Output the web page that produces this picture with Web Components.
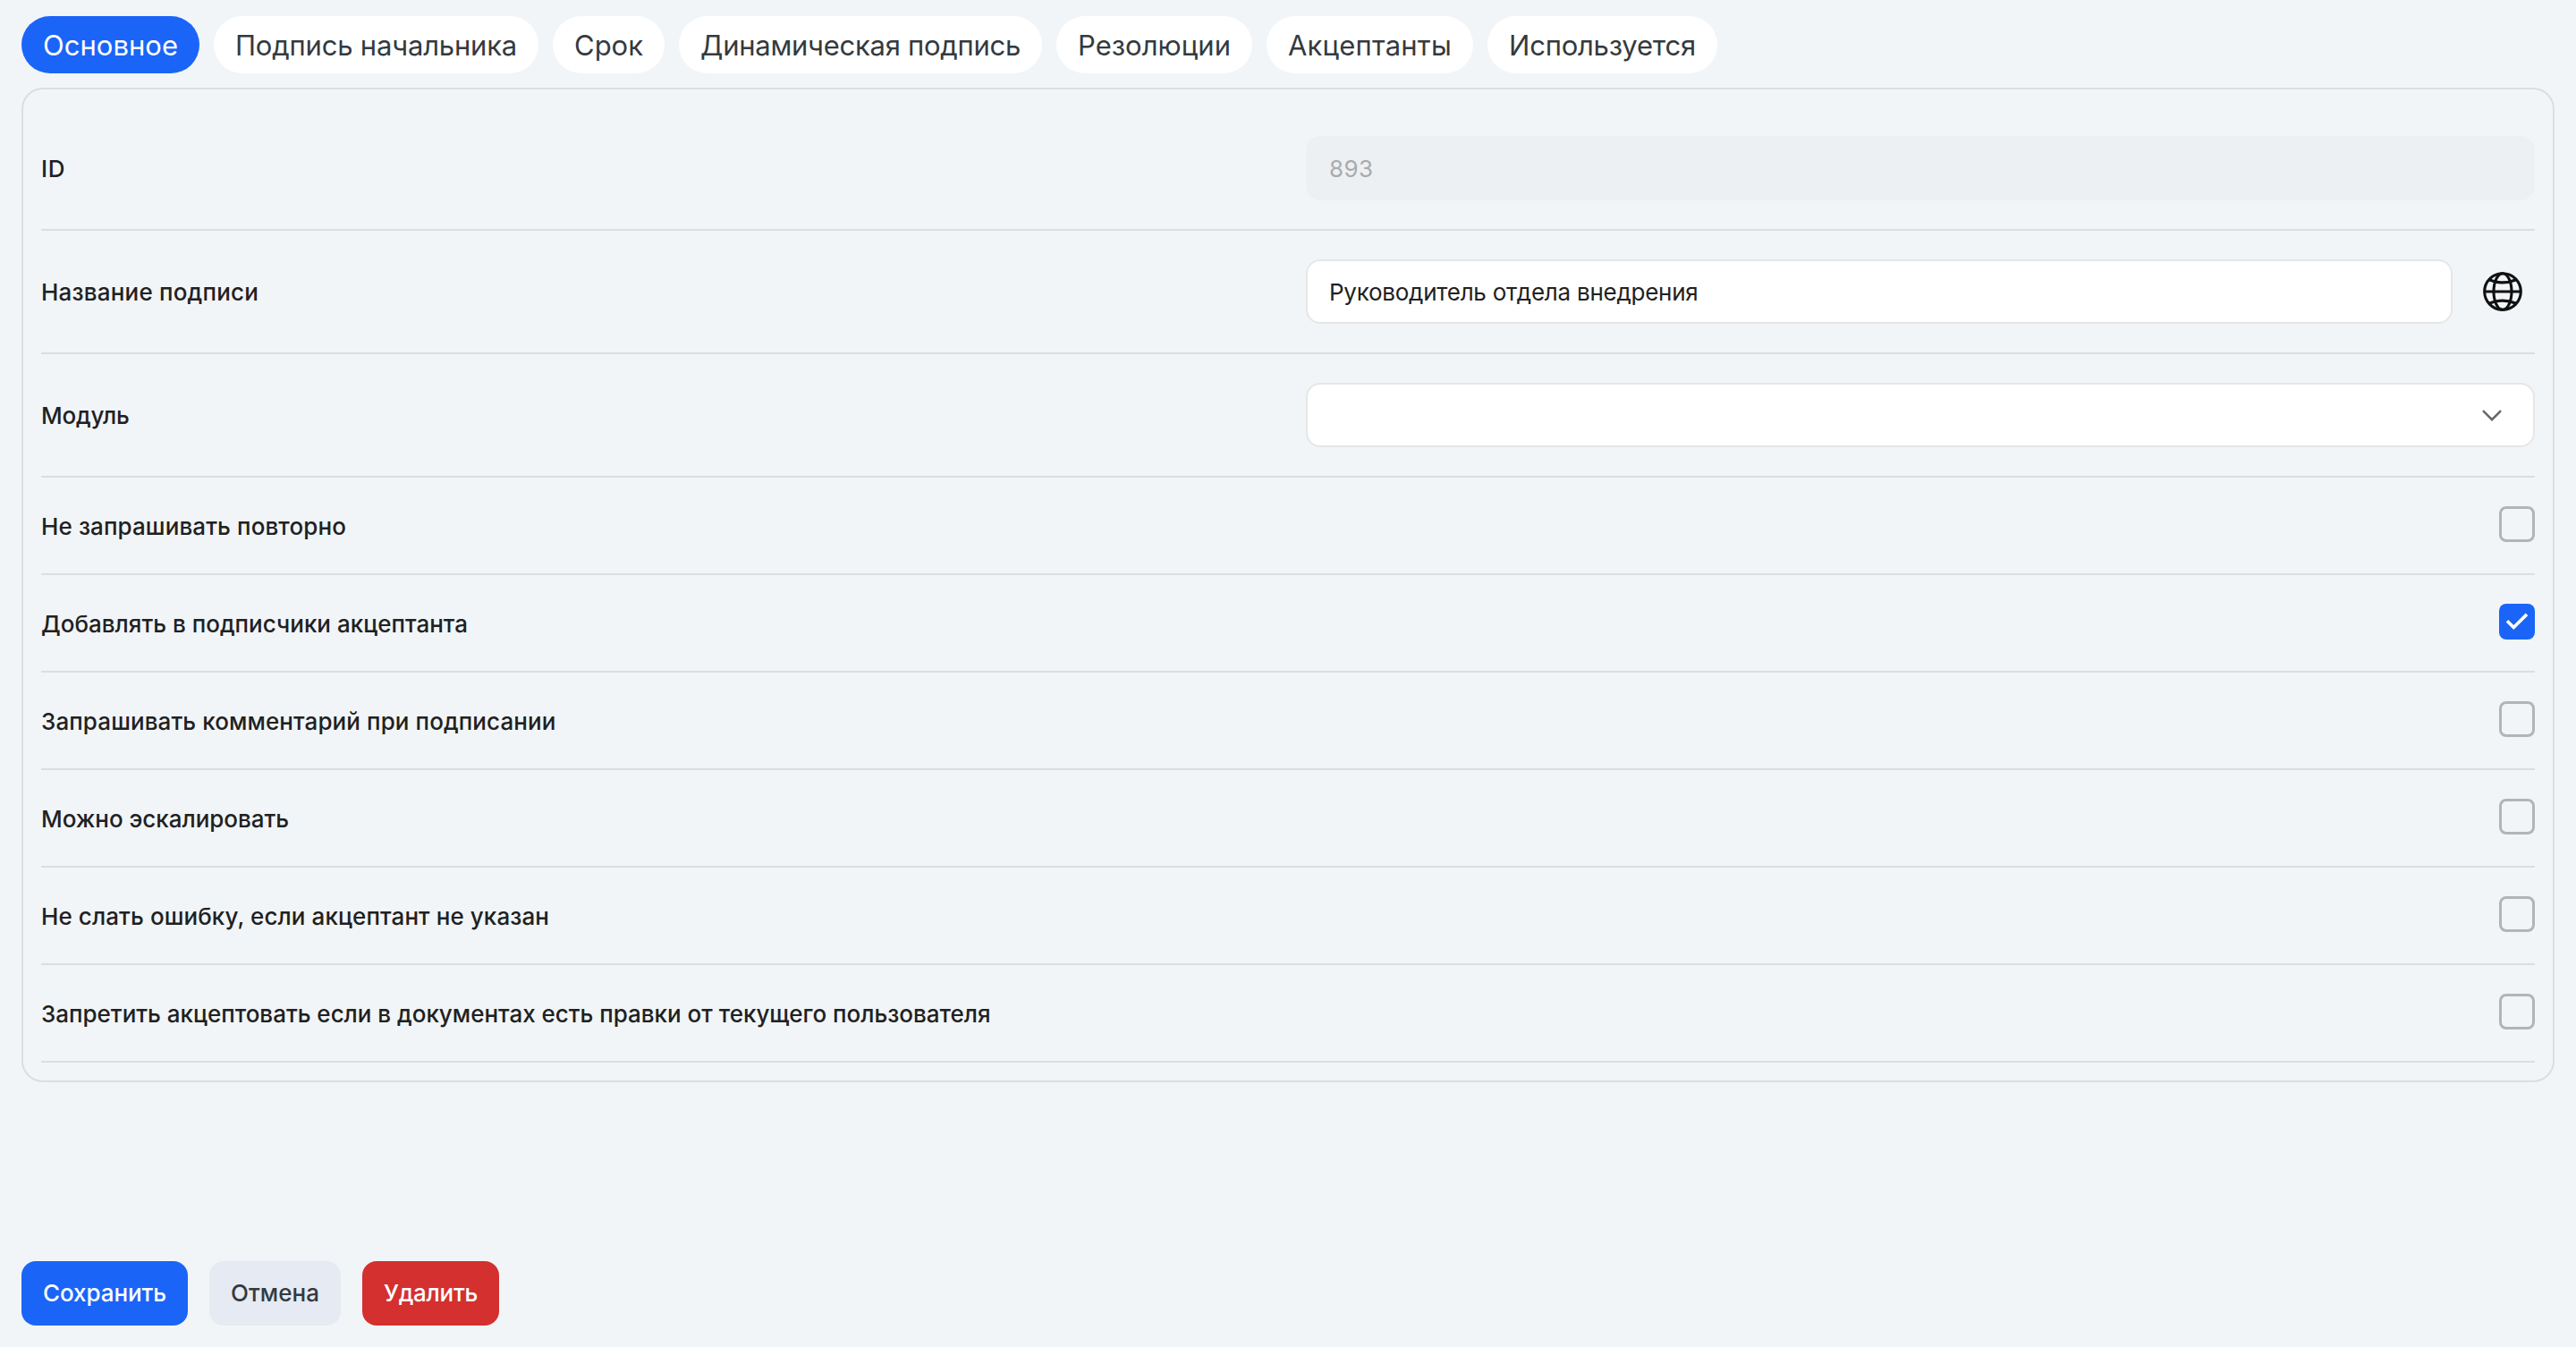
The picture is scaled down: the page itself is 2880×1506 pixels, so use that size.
<!DOCTYPE html>
<html lang="ru">
<head>
<meta charset="utf-8">
<title>Подпись</title>
<style>
  html, body { margin: 0; height: 100%; }
  body { background: #f1f5f8; font-family: Inter, "Noto Sans", sans-serif; color: #212121; }
</style>
</head>
<body>
<signature-page>
  <tab-item slot="tabs" active fit="151">Основное</tab-item>
  <tab-item slot="tabs" fit="315">Подпись начальника</tab-item>
  <tab-item slot="tabs" fit="77">Срок</tab-item>
  <tab-item slot="tabs" fit="358">Динамическая подпись</tab-item>
  <tab-item slot="tabs" fit="171">Резолюции</tab-item>
  <tab-item slot="tabs" fit="183">Акцептанты</tab-item>
  <tab-item slot="tabs" fit="209">Используется</tab-item>

  <form-row label="ID" fit="27"><text-field disabled fit="49.5">893</text-field></form-row>
  <form-row label="Название подписи" fit="243"><text-field fit="412.5">Руководитель отдела внедрения</text-field><globe-button></globe-button></form-row>
  <form-row label="Модуль" fit="98.5"><select-field></select-field></form-row>
  <form-row compact label="Не запрашивать повторно" fit="341"><check-box></check-box></form-row>
  <form-row compact label="Добавлять в подписчики акцептанта" fit="477"><check-box checked></check-box></form-row>
  <form-row compact label="Запрашивать комментарий при подписании" fit="575.5"><check-box></check-box></form-row>
  <form-row compact label="Можно эскалировать" fit="277"><check-box></check-box></form-row>
  <form-row compact label="Не слать ошибку, если акцептант не указан" fit="568"><check-box></check-box></form-row>
  <form-row compact label="Запретить акцептовать если в документах есть правки от текущего пользователя" fit="1061.5"><check-box></check-box></form-row>

  <action-button slot="actions" kind="primary" fit="138">Сохранить</action-button>
  <action-button slot="actions" kind="neutral" fit="99">Отмена</action-button>
  <action-button slot="actions" kind="danger" fit="105">Удалить</action-button>
</signature-page>

<script>
  class BaseElement extends HTMLElement {
    connectedCallback() {
      if (this.shadowRoot) return;
      this.attachShadow({ mode: 'open' }).innerHTML = this.render();
      this.fitText();
    }
    // Spreads the letters of .text evenly so the line takes the width in the "fit" attribute.
    fitText() {
      const want = parseFloat(this.getAttribute('fit'));
      const text = this.shadowRoot.querySelector('.text');
      if (!want || !text) return;
      const count = (this.getAttribute('label') || this.textContent.trim()).length;
      const width = text.getBoundingClientRect().width;
      text.style.letterSpacing = (want - width) / count + 'px';
    }
  }

  customElements.define('signature-page', class extends BaseElement {
    render() {
      return `<style>
        :host { display: flex; flex-direction: column; box-sizing: border-box; height: 100vh; padding: 18px 24px 24px; }
        nav { display: flex; gap: 16px; margin-bottom: 16px; }
        main { border: 2px solid #dadee1; border-radius: 24px; padding: 20px; display: flex; flex-direction: column; }
        footer { display: flex; gap: 24px; margin-top: auto; }
      </style>
      <nav><slot name="tabs"></slot></nav>
      <main><slot></slot></main>
      <footer><slot name="actions"></slot></footer>`;
    }
  });

  customElements.define('tab-item', class extends BaseElement {
    render() {
      return `<style>
        :host { display: flex; align-items: center; box-sizing: border-box; height: 64px; padding: 1px 24px 0; border-radius: 32px;
          background: #fff; color: #343a40; font-size: 31px; line-height: 40px; white-space: nowrap; }
        :host([active]) { background: #1a65f8; color: #fff; }
      </style><span class="text"><slot></slot></span>`;
    }
  });

  customElements.define('form-row', class extends BaseElement {
    render() {
      return `<style>
        :host { display: flex; align-items: center; box-sizing: border-box; height: 138px; padding: 32px 0;
          border-bottom: 2px solid #dadee1; }
        :host([compact]) { height: 109px; padding: 32px 0 35px; }
        .label { flex: 1; padding-top: 2px; font-size: 26px; font-weight: 450; line-height: 32px; white-space: nowrap; }
        :host([compact]) .label { padding-top: 5px; }
        .control { display: flex; align-items: center; gap: 20px; width: 1374px; }
        :host([compact]) .control { width: auto; }
      </style>
      <div class="label"><span class="text">${this.getAttribute('label')}</span></div>
      <div class="control"><slot></slot></div>`;
    }
  });

  customElements.define('text-field', class extends BaseElement {
    render() {
      return `<style>
        :host { display: flex; flex: 1; align-items: center; box-sizing: border-box; height: 72px; padding: 2px 24px 0;
          border: 2px solid #e5e6e6; border-radius: 16px; background: #fff; font-size: 26px; line-height: 32px; white-space: nowrap; }
        :host([disabled]) { background: #ecf0f3; border-color: #ecf0f3; color: #a8abad; }
      </style><span class="text"><slot></slot></span>`;
    }
  });

  customElements.define('select-field', class extends BaseElement {
    render() {
      return `<style>
        :host { display: flex; flex: 1; align-items: center; justify-content: flex-end; box-sizing: border-box; height: 72px;
          padding-right: 34px; border: 2px solid #e5e6e6; border-radius: 16px; background: #fff; }
        svg { display: block; }
      </style>
      <svg width="24" height="24" viewBox="0 0 24 24" fill="none" stroke="#666" stroke-width="2.4"><path d="M2 7.2 12 17.2 22 7.2"/></svg>`;
    }
  });

  customElements.define('globe-button', class extends BaseElement {
    render() {
      return `<style>
        :host { display: flex; align-items: center; justify-content: center; width: 72px; height: 72px; }
        svg { display: block; }
      </style>
      <svg width="48" height="48" viewBox="0 0 48 48" fill="none" stroke="#111" stroke-width="3.1">
        <circle cx="24" cy="24" r="20.3"/>
        <ellipse cx="24" cy="24" rx="10" ry="20.3"/>
        <path d="M3.6 24H44.4M9.5 11Q24 16.8 38.5 11M9.5 37Q24 31.2 38.5 37"/>
      </svg>`;
    }
  });

  customElements.define('check-box', class extends BaseElement {
    render() {
      const mark = this.hasAttribute('checked')
        ? '<svg width="40" height="40" viewBox="0 0 40 40" fill="none" stroke="#fff" stroke-width="3.6"><path d="M9 19.2 16.3 26.5 31 11.9"/></svg>'
        : '';
      return `<style>
        :host { display: block; box-sizing: border-box; width: 40px; height: 40px; border: 3px solid #b1b5b8; border-radius: 8px; }
        :host([checked]) { border: 0; background: #1a65f8; }
        svg { display: block; }
      </style>${mark}`;
    }
  });

  customElements.define('action-button', class extends BaseElement {
    render() {
      return `<style>
        :host { display: flex; align-items: center; box-sizing: border-box; height: 72px; padding: 0 24px; border-radius: 16px;
          font-size: 26px; font-weight: 450; line-height: 32px; white-space: nowrap; color: #fff; }
        :host([kind=primary]) { background: #1a65f8; }
        :host([kind=neutral]) { background: #e6eaf2; color: #343a40; }
        :host([kind=danger]) { background: #d3302f; }
      </style><span class="text"><slot></slot></span>`;
    }
  });
</script>
</body>
</html>
